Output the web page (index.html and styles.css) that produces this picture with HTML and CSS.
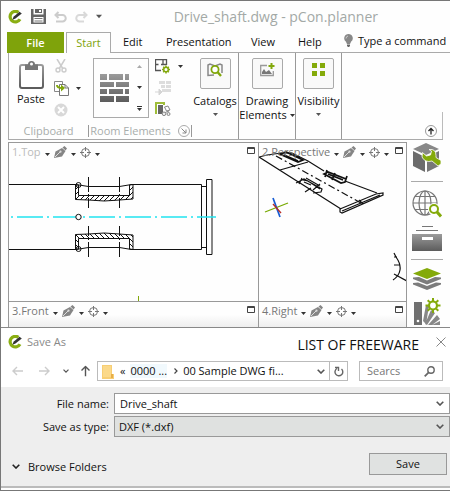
FILE: index.html
```html
<!DOCTYPE html>
<html lang="en">
<head>
<meta charset="utf-8">
<title>Drive_shaft.dwg - pCon.planner</title>
<link rel="stylesheet" href="styles.css">
</head>
<body>
<svg class="defs" aria-hidden="true">
  <defs>
    <linearGradient id="steel" x1="0" y1="0" x2="0" y2="1"><stop offset="0" stop-color="#9b9b9b"/><stop offset="1" stop-color="#5c5c5c"/></linearGradient>
    <pattern id="hatch" width="5" height="5" patternUnits="userSpaceOnUse"><path d="M-1 6L6-1M-1 1L1-1M4 6L6 4" stroke="#111" stroke-width="1"/></pattern>
    <symbol id="logo" viewBox="0 0 14 14"><path d="M10.500 2.300A5.300 5.300 0 1 0 12 9.300" fill="none" stroke="#8aae12" stroke-width="3.200"/><path d="M4.500 9.800l1-3L11.500 1.800 13.800 3.500 7.500 8.500z" fill="#333"/></symbol>
    <symbol id="caret" viewBox="0 0 5 3"><path d="M0 0h5L2.500 3z" fill="currentColor"/></symbol>
    <symbol id="chevron" viewBox="0 0 8 5"><path d="M.7.7L4 4 7.300.7" fill="none" stroke="currentColor" stroke-width="1.600"/></symbol>
    <symbol id="pen" viewBox="0 0 13 12"><path d="M0 12L1.500 5.500 8 2l3.500 3-3.500 5.500z" fill="#858585"/><path d="M8.500 1.500L10.500 0 13 2.500 11.500 4.500z" fill="#858585"/><path d="M1 11l5-5" stroke="#ddd"/><circle cx="6.500" cy="5.700" r="1.100" fill="#ddd"/></symbol>
    <symbol id="target" viewBox="0 0 11 11"><circle cx="5.500" cy="5.500" r="4" fill="none" stroke="#777"/><path d="M5.500 0v4M5.500 7v4M0 5.500h4M7 5.500h4" stroke="#777"/></symbol>
    <symbol id="maximize" viewBox="0 0 8 7"><path d="M.5.5h7v6h-7zM0 1.500h8" fill="none" stroke="#444"/></symbol>
    <symbol id="arrow" viewBox="0 0 11 10"><path d="M11 5H1M5 1L1 5l4 4" fill="none" stroke="currentColor" stroke-width="1.400"/></symbol>
  </defs>
</svg>

<main class="app">
  <header class="titlebar">
    <svg class="logo"><use href="#logo"/></svg>
    <div class="quick">
      <button aria-label="Save file"><svg width="15" height="15" viewBox="0 0 15 15"><path d="M0 0h2.500v5.500h10V0H15v15H0z" fill="#666"/><path d="M4 0h7v4H4z" fill="#666"/><path d="M8 1h2v2H8z" fill="#fff"/><path d="M2.500 8h10v5.500h-10z" fill="#fff"/><path d="M3.500 9.500h8M3.500 12h8" stroke="#777"/></svg></button>
      <button aria-label="Undo"><svg width="13" height="12" viewBox="0 0 13 12"><path d="M4.500 1L1.500 4l3 3M2 4h6.500a3 3 0 0 1 0 6.500H2" fill="none" stroke="#ccc" stroke-width="2"/></svg></button>
      <button aria-label="Redo"><svg width="13" height="12" viewBox="0 0 13 12"><path d="M8.500 1l3 3-3 3M11 4H4.500a3 3 0 0 0 0 6.500H9" fill="none" stroke="#d9d9d9" stroke-width="2"/></svg></button>
      <button aria-label="Customize toolbar"><svg class="caret big"><use href="#caret"/></svg></button>
    </div>
    <h1>Drive_shaft.dwg - pCon.planner</h1>
  </header>

  <nav class="tabs">
    <button class="file">File</button>
    <button class="active">Start</button>
    <button class="edit">Edit</button>
    <button class="presentation">Presentation</button>
    <button class="view">View</button>
    <button class="help">Help</button>
    <button class="command"><svg width="9" height="13" viewBox="0 0 9 13"><path d="M4.500 0a4.300 4.300 0 0 0-2.700 7.600L3 10h3l1.200-2.400A4.300 4.300 0 0 0 4.500 0z" fill="#888"/><path d="M3 10.500h3v1.500l-1 1H4l-1-1z" fill="#666"/><path d="M2 4.500q0-2 2-2.500" stroke="#ccc" fill="none"/></svg>Type a command</button>
  </nav>

  <section class="ribbon">
    <div class="group clipboard">
      <div class="tools">
        <button class="paste"><svg width="25" height="29" viewBox="0 0 25 29"><rect x="1" y="5" width="23" height="23" rx="2" fill="#fff" stroke="url(#steel)" stroke-width="2"/><path d="M6 10V4.500h3a3.500 3.500 0 0 1 7 0h3V10z" fill="#777"/><circle cx="12.500" cy="4" r="1.500" fill="#fff"/></svg>Paste</button>
        <div class="stack">
          <button aria-label="Cut"><svg width="14" height="14" viewBox="0 0 14 14"><path d="M3 0l6 10M11 0L5 10" stroke="#ccc" stroke-width="1.500"/><g fill="none" stroke="#ccc" stroke-width="1.400"><circle cx="4" cy="11" r="2"/><circle cx="10" cy="11" r="2"/></g></svg></button>
          <button aria-label="Copy"><svg width="15" height="15" viewBox="0 0 15 15"><path d="M.5.500h8v10h-8z" fill="#fff" stroke="#888"/><path d="M5.500 3.500H11l3.500 3.500v7.500h-9z" fill="#fff" stroke="#777"/><path d="M11 3.500V7h3.500" fill="none" stroke="#777"/><path d="M3 4q0 3 5 3" fill="none" stroke="#82a80c" stroke-width="2"/><path d="M7 3.500l4 3.500-4 3.500z" fill="#82a80c"/></svg><svg class="caret"><use href="#caret"/></svg></button>
          <button aria-label="Delete"><svg width="14" height="14" viewBox="0 0 14 14"><circle cx="7" cy="7" r="6.500" fill="#d8d8d8"/><path d="M4 4l6 6M10 4l-6 6" stroke="#fff" stroke-width="2"/></svg></button>
        </div>
      </div>
      <footer>Clipboard</footer>
    </div>
    <div class="group room">
      <div class="tools">
        <div class="gallery">
          <svg width="29" height="28" viewBox="0 0 29 28" fill="url(#steel)"><path d="M0 0h7v6H0zM9 0h14v6H9zM25 0h4v6h-4zM0 8h14v5H0zM16 8h13v5H16zM0 15h7v5H0zM9 15h14v5H9zM25 15h4v5h-4zM0 22h14v6H0zM16 22h13v6H16z"/></svg>
          <div class="steps">
            <button aria-label="Previous"><svg class="caret up"><use href="#caret"/></svg></button>
            <button aria-label="Next"><svg class="caret"><use href="#caret"/></svg></button>
            <button aria-label="More"><svg width="5" height="5" viewBox="0 0 5 5"><path d="M0 .5h5" stroke="#333"/><path d="M0 2h5L2.500 5z" fill="#333"/></svg></button>
          </div>
        </div>
        <div class="stack">
          <button aria-label="Room"><svg width="16" height="15" viewBox="0 0 16 15"><path d="M6 11.500H.5V.500h11V6M.5 5.500h3M6 5.500h2V.500M11 5.500H8" fill="none" stroke="#555" stroke-width="1.300"/><g stroke="#82a80c" stroke-width="1.500" fill="none"><circle cx="11" cy="10.500" r="2.300"/><path d="M11 6.500v2M11 12.500v2M7 10.500h2M13 10.500h2M8.200 7.700l1.300 1.300M12.500 12l1.300 1.300M13.800 7.700L12.500 9M9.500 12l-1.300 1.300"/></g></svg><svg class="caret"><use href="#caret"/></svg></button>
          <button aria-label="Insert wall"><svg width="16" height="15" viewBox="0 0 16 15"><path d="M4 0h6v3H4zM11 0h5v3h-5zM6 4h4v3H6zM11 4h5v3h-5zM7 8h9v3H7z" fill="#ddd"/><path d="M0 11h6M4 8v6l3-3z" stroke="#d5d5d5" fill="#d5d5d5"/></svg></button>
          <button aria-label="Room objects"><svg width="16" height="15" viewBox="0 0 16 15"><path d="M1 12V1h8v2" fill="none" stroke="#9fbd39" stroke-width="2"/><path d="M3 3h5v9H3z" fill="#666"/><path d="M9.500 5l3.500-1 2 4-3.500 1zM9 11l5-2" fill="#fff" stroke="#888"/><circle cx="9" cy="11.800" r="1.800" fill="#eee" stroke="#888"/><circle cx="13.500" cy="12" r="1.500" fill="#eee" stroke="#888"/></svg></button>
        </div>
      </div>
      <footer>Room Elements <svg width="12" height="12" viewBox="0 0 12 12"><circle cx="6" cy="6" r="5.500" fill="none" stroke="#aaa"/><path d="M3.500 3.500L8 8M8 4.500V8H4.500" fill="none" stroke="#888"/></svg></footer>
    </div>
    <div class="group full">
      <button class="large"><span class="tile"><svg width="16" height="14" viewBox="0 0 16 14"><path d="M7 12L1 12.500V2l2-1 5 2 5-2 2 1v8" fill="none" stroke="#888" stroke-width="1.500"/><circle cx="8" cy="6.500" r="3.600" fill="#fff" stroke="#82a80c" stroke-width="1.800"/><path d="M10.500 9l3.500 4" stroke="#82a80c" stroke-width="2.400"/></svg></span><span>Catalogs</span><svg class="caret"><use href="#caret"/></svg></button>
    </div>
    <div class="group full">
      <button class="large"><span class="tile"><svg width="15" height="14" viewBox="0 0 15 14"><path d="M7 2.500H.700V12.500H13.300V8" fill="none" stroke="#999" stroke-width="1.300"/><path d="M2 11V9l2-3 2 3 3-2 3 4z" fill="#777"/><path d="M11.500 0v6M8.500 3h6" stroke="#82a80c" stroke-width="2"/></svg></span><span>Drawing</span><span class="second">Elements <svg class="caret"><use href="#caret"/></svg></span></button>
    </div>
    <div class="group full">
      <button class="large"><span class="tile"><svg width="13" height="13" viewBox="0 0 13 13"><path d="M0 0h5v5H0zM8 0h5v5H8zM0 8h5v5H0zM8 8h5v5H8z" fill="#84aa0a"/></svg></span><span>Visibility</span><svg class="caret"><use href="#caret"/></svg></button>
    </div>
    <div class="collapse"><button aria-label="Collapse ribbon"><svg width="12" height="12" viewBox="0 0 12 12"><circle cx="6" cy="6" r="5.500" fill="#fff" stroke="#999"/><path d="M6 9.500V3.500M3.500 6L6 3.500 8.500 6" fill="none" stroke="#222" stroke-width="1.300"/></svg></button></div>
  </section>

  <section class="workspace">
    <div class="viewports">
      <article class="viewport">
        <svg class="drawing" width="248" height="158" viewBox="9 143 248 158">
          <g fill="none" stroke="#111">
            <path d="M9 184.500H76M131 184.500H201.500V249.500H131M76 249.500H9M201 186.500h6M201 247.500h6"/>
            <path d="M206.500 179.500h5.500v75h-5.500z"/>
            <path d="M11 217h205" stroke="#22e4f0" stroke-width="1.600" stroke-dasharray="2 4 26 4"/>
            <g id="pocket">
              <path d="M75.500 185v14.500l13 .5q16 2 31 0l13.500-1V184.500l-3.500.5v10.500h-51V185z" fill="url(#hatch)"/>
              <path d="M76 184.500l12.500 2h31l12-2"/>
              <circle cx="78.500" cy="185" r="2.500"/>
              <path d="M88.500 177v15M88.500 194v1M88.500 198v10M119.500 177v15M119.500 194v1M119.500 198v10"/>
            </g>
            <use href="#pocket" transform="matrix(1 0 0 -1 0 434)"/>
            <circle cx="78.500" cy="217" r="2.700" fill="#fff"/>
            <path d="M138.500 296v5" stroke="#82a80c"/>
          </g>
        </svg>
        <header class="faint"><span>1.Top</span><svg class="caret"><use href="#caret"/></svg><svg class="pen"><use href="#pen"/></svg><svg class="caret"><use href="#caret"/></svg><svg class="target"><use href="#target"/></svg><svg class="caret"><use href="#caret"/></svg><svg class="max"><use href="#maximize"/></svg></header>
      </article>
      <article class="viewport">
        <svg class="drawing" width="148" height="158" viewBox="259 143 148 158">
          <g fill="none" stroke="#111" stroke-width="1.200">
            <path d="M259 157l82 52M259 157l8-2 7-1 8-1 10 0 16 8 16 10M345 181l32 12M280 170l28-8"/>
            <path d="M276 156l85 47" stroke-dasharray="7 3 2 3"/>
            <path d="M340 209l36-15 7-1v2l-41 18-2-1zM342 211l38-16M359 200l4 4"/>
            <path d="M280 154l6-2 17 8-5 2zM284 155l14 6M290 153l10 5" stroke-width="1.800"/>
            <path d="M324 174l4-2 18 7-1 3-4 1zM328 174l15 6M327 170l-2 7M335 173l-3 7M347 176l-2 6" stroke-width="1.700"/>
            <path d="M296 183l8-4 18 10-1 3-8 1M303 180l5 1 12 8M306 178l14 8M302 178l-3 6M311 188l-6 4M320 184l-7 6M304 182l7 3"/>
            <path d="M394 253l2 4q5 7 4 13-1 6-7 10M394 257h3M394 265h6M394 274l13 7"/>
          </g>
          <g fill="none" stroke-width="1.300"><path d="M265 212l23-9" stroke="#77a900"/><path d="M273 198l7 19" stroke="#175dd4" stroke-width="1.700"/><path d="M273 204l8 9" stroke="#b82b25"/></g>
        </svg>
        <header><span>2.Perspective</span><svg class="caret"><use href="#caret"/></svg><svg class="pen"><use href="#pen"/></svg><svg class="caret"><use href="#caret"/></svg><svg class="target"><use href="#target"/></svg><svg class="caret"><use href="#caret"/></svg><svg class="max"><use href="#maximize"/></svg></header>
      </article>
      <article class="viewport low">
        <header><span>3.Front</span><svg class="caret"><use href="#caret"/></svg><svg class="pen"><use href="#pen"/></svg><svg class="caret"><use href="#caret"/></svg><svg class="target"><use href="#target"/></svg><svg class="caret"><use href="#caret"/></svg><svg class="max"><use href="#maximize"/></svg></header>
      </article>
      <article class="viewport low">
        <header><span>4.Right</span><svg class="caret"><use href="#caret"/></svg><svg class="pen"><use href="#pen"/></svg><svg class="caret"><use href="#caret"/></svg><svg class="target"><use href="#target"/></svg><svg class="caret"><use href="#caret"/></svg><svg class="max"><use href="#maximize"/></svg></header>
      </article>
    </div>
    <aside class="sidebar">
      <button aria-label="Modeling"><svg width="30" height="30" viewBox="0 0 30 30"><path d="M14 0l13 6-13 6L1 6z" fill="#888"/><path d="M1 8l12 6v15L1 23z" fill="#6c6c6c"/><path d="M27 8l-12 6v15l12-6z" fill="#777"/><path d="M10.500 9.500l4 3.500 4-1 1-4-2.500-1.500q7-1 7 6v2l5 3v3.500l-3 2-6-5q-7 2-10-4z" fill="#84aa0a" stroke="#fff" stroke-width=".8"/></svg></button>
      <hr>
      <button aria-label="Online catalogs"><svg width="30" height="28" viewBox="0 0 30 28"><g fill="none" stroke="#777" stroke-width="1.200"><circle cx="13" cy="13" r="12"/><ellipse cx="13" cy="13" rx="6" ry="12"/><path d="M13 1v24M1 13h24M3 6.500h20M3 19.500h20"/></g><circle cx="22" cy="19" r="6" fill="#fff"/><circle cx="22" cy="19" r="4" fill="#fff" stroke="#84aa0a" stroke-width="2"/><path d="M25 22l4 4.500" stroke="#84aa0a" stroke-width="3"/></svg></button>
      <button aria-label="Drawer"><svg width="30" height="25" viewBox="0 0 30 25"><path d="M10 .5h11M4 4.500h22" stroke="#777"/><path d="M0 8h30v17H0z" fill="url(#steel)"/><path d="M10 11h11v3H10z" fill="#fff"/></svg></button>
      <hr>
      <button aria-label="Layers"><svg width="30" height="22" viewBox="0 0 30 22"><path d="M15 0l14 5.500L15 11 1 5.500z" fill="#84aa0a"/><path d="M1 9.500L7 9l8 3.500L23 9l6 .5v1.500L15 16.500 1 11zM1 15l5-.5 9 3.500 9-3.500 5 .5v1.500L15 22 1 16.500z" fill="#7c7c7c"/></svg></button>
      <button aria-label="Materials"><svg width="30" height="28" viewBox="0 0 30 28"><path d="M2 4h8v23H2z" fill="#707070"/><path d="M11 23l3-16 3 1-3 18zM13 26l6-14 4 3-8 12zM16 27l9-10 3 4-8 6zM20 27l8-4v4z" fill="#888"/><circle cx="6" cy="23" r="1.300" fill="#fff"/><circle cx="21" cy="7.500" r="4" fill="#fff" stroke="#84aa0a" stroke-width="2.200"/><path d="M21 0v3M21 12v3M13.500 7.500h3M25.500 7.500h3M15.700 2.200l2.200 2.200M24.100 10.600l2.200 2.200M26.300 2.200l-2.200 2.200M17.900 10.600l-2.200 2.200" stroke="#84aa0a" stroke-width="2"/></svg></button>
    </aside>
  </section>

  <section class="dialog">
    <header class="dialog-title">
      <svg class="logo"><use href="#logo"/></svg><h2>Save As</h2>
      <strong>LIST OF FREEWARE</strong>
      <button aria-label="Close"><svg width="10" height="10" viewBox="0 0 10 10"><path d="M.5.500l9 9M9.500.500l-9 9" stroke="#888"/></svg></button>
    </header>
    <div class="path-row">
      <button class="dim" aria-label="Back"><svg class="arrow"><use href="#arrow"/></svg></button>
      <button class="dim" aria-label="Forward"><svg class="arrow flip"><use href="#arrow"/></svg></button>
      <button class="dim recent" aria-label="Recent locations"><svg class="chev small"><use href="#chevron"/></svg></button>
      <button class="parent" aria-label="Up"><svg class="arrow turn"><use href="#arrow"/></svg></button>
      <div class="address">
        <svg width="12" height="15" viewBox="0 0 12 15"><path d="M0 1h10v9h2v5H0z" fill="#f7ce74"/><path d="M1 2h8v11H1z" fill="#fbd98a"/><path d="M9 10h2v4H9z" fill="#e7ae49"/></svg>
        <a href="#">«</a><a href="#" class="crumb">0000 ...</a><svg width="4" height="6" viewBox="0 0 4 6"><path d="M.5.500L3 3 .5 5.500" fill="none" stroke="#444" stroke-width="1.200"/></svg><a href="#" class="crumb last">00 Sample DWG fi...</a>
        <button class="history" aria-label="Previous locations"><svg class="chev"><use href="#chevron"/></svg></button>
        <button class="refresh" aria-label="Refresh"><svg width="10" height="11" viewBox="0 0 10 11"><path d="M7.500 3A3.900 3.900 0 1 1 3 2.500M1 1.500h3.500V5" fill="none" stroke="#666" stroke-width="1.400"/></svg></button>
      </div>
      <label class="search"><input type="text" aria-label="Search" placeholder="Searcs"><svg width="11" height="11" viewBox="0 0 11 11"><circle cx="7" cy="4" r="3.200" fill="none" stroke="#666" stroke-width="1.400"/><path d="M4.700 6.300L.7 10.300" stroke="#666" stroke-width="1.800"/></svg></label>
    </div>
    <form class="fields">
      <label for="name">File name:</label>
      <div class="field"><input id="name" type="text" value="Drive_shaft"><svg class="chev"><use href="#chevron"/></svg></div>
      <label for="type">Save as type:</label>
      <div class="field type"><select id="type"><option>DXF (*.dxf)</option></select><svg class="chev"><use href="#chevron"/></svg></div>
      <div class="actions">
        <button type="button" class="browse"><svg class="chev"><use href="#chevron"/></svg>Browse Folders</button>
        <button type="button" class="save">Save</button>
      </div>
    </form>
  </section>
</main>
</body>
</html>
```
FILE: styles.css
```css
* { box-sizing: border-box; }
body { margin: 0; background: #fefefe; color: #111; font: 11px/14px "Open Sans", "Noto Sans", sans-serif; }
button { display: flex; align-items: center; justify-content: center; margin: 0; padding: 0; border: 0; background: none; color: inherit; font: inherit; white-space: nowrap; }
input, select { font: inherit; color: inherit; border: 0; background: none; padding: 0; margin: 0; }
svg { display: block; flex: none; }
h1, h2 { margin: 0; font-weight: 400; }
a { color: inherit; text-decoration: none; }
.defs { position: absolute; width: 0; height: 0; }
.caret { width: 5px; height: 3px; color: #333; }
.caret.big { width: 6px; height: 5px; color: #555; }
.caret.up { transform: rotate(180deg); color: #aaa; }
.chev { width: 8px; height: 5px; color: #555; }
.chev.small { width: 6px; height: 4px; }
.logo { width: 14px; height: 14px; }

.app { border-top: 1px solid #777; border-left: 1px solid #777; border-bottom: 1px solid #777; }
.titlebar { display: flex; align-items: center; height: 31px; padding-left: 7px; }
.quick { display: flex; align-items: center; gap: 8px; margin-left: 9px; }
.titlebar h1 { flex: 1; padding: 0 72px 0 0; text-align: right; font-size: 14px; line-height: 18px; color: #a3a9a6; white-space: nowrap; }

.tabs { display: flex; align-items: stretch; height: 21px; margin-left: 6px; }
.tabs button { border-bottom: 1px solid #aaa; justify-content: flex-start; }
.tabs .file { width: 57px; justify-content: center; background: #7fa30b; color: #fff; font-weight: 600; border: 0; }
.tabs .active { width: 45px; margin-left: 2px; justify-content: center; border: 1px solid #aaa; border-bottom: 0; color: #7fa30b; font-weight: 500; }
.tabs .edit { width: 55px; padding-left: 12px; }
.tabs .presentation { width: 85px; }
.tabs .view { width: 47px; }
.tabs .help { width: 46px; }
.tabs .command { flex: 1; gap: 5px; padding-bottom: 3px; }

.ribbon { display: grid; grid-template-columns: 80px 103px 47px 57px 46px 1fr; height: 87px; margin: 0 7px 0 7px; border-left: 1px solid #aaa; border-bottom: 1px solid #aaa; }
.group { display: flex; flex-direction: column; justify-content: space-between; }
.tools { display: flex; padding: 5px 0 0 8px; }
.group footer { display: flex; align-items: center; justify-content: center; gap: 7px; height: 12px; margin-bottom: 2px; border-right: 1px solid #999; color: #a8adab; white-space: nowrap; }
.paste { flex-direction: column; justify-content: flex-start; gap: 3px; width: 28px; padding-top: 2px; }
.stack { display: flex; flex-direction: column; justify-content: space-between; align-items: flex-start; height: 60px; padding: 1px 0; margin-left: 9px; }
.stack button { gap: 7px; }
.room .tools { padding-left: 4px; }
.room .stack { margin-left: 6px; }
.gallery { display: flex; align-items: center; justify-content: space-between; width: 56px; height: 60px; padding: 0 6px 0 6px; border: 1px solid #aaa; }
.steps { display: flex; flex-direction: column; justify-content: space-between; height: 46px; }
.full { border-right: 1px solid #999; }
.large { flex-direction: column; padding-top: 5px; }
.tile { display: flex; align-items: center; justify-content: center; width: 31px; height: 31px; padding-bottom: 8px; margin-bottom: 5px; border: 1px solid #aaa; border-radius: 2px; background: #f9f9f9; }
.large > .caret { margin-top: 5px; color: #555; }
.second { display: flex; align-items: center; gap: 3px; }
.collapse { display: flex; align-items: flex-end; justify-content: flex-end; margin-top: 59px; padding: 0 5px 2px 0; border-right: 1px solid #bbb; }

.workspace { display: flex; margin: 2px 7px 0 7px; }
.viewports { flex: 1; display: grid; grid-template-columns: 250px minmax(0, 1fr); grid-template-rows: 159px 26px; border-right: 1px solid #999; }
.viewport { display: grid; grid-template-columns: minmax(0, 1fr); border: 1px solid #999; border-right: 0; border-bottom: 0; overflow: hidden; }
.viewport > * { grid-area: 1 / 1; }
.viewport header { display: flex; align-items: center; align-self: start; gap: 4px; height: 18px; padding: 0 3px; color: #777; }
.viewport header.faint { color: #bbb; }
.viewport header .caret { margin-top: 5px; }
.low { background: linear-gradient(#fefefe 50%, #eee); }
.pen { width: 13px; height: 12px; }
.target { width: 11px; height: 11px; }
.max { width: 8px; height: 7px; margin-left: auto; margin-bottom: 4px; }
.sidebar { display: flex; flex-direction: column; align-items: center; gap: 8px; width: 36px; padding: 1px 0 0 4px; }
.sidebar hr { width: 100%; margin: 0; border: 0; border-top: 1px solid #aaa; }

.dialog { border-top: 1px solid #888; border-bottom: 2px solid #bbb; margin-bottom: 2px; background: #fff; }
.dialog-title { display: flex; align-items: center; height: 27px; padding: 0 4px 0 7px; }
.dialog-title h2 { margin-left: 5px; font-size: 11px; color: #888; }
.dialog-title strong { margin: 7px 17px 0 auto; font: 400 14px/18px "Open Sans", sans-serif; }
.path-row { display: flex; align-items: center; height: 32px; padding: 0 7px 0 11px; }
.arrow { width: 11px; height: 10px; }
.flip { transform: scaleX(-1); }
.turn { transform: rotate(90deg); }
.dim { color: #ccc; margin-right: 16px; }
.dim.recent { margin: 0 11px 0 -3px; }
.parent { color: #555; margin-right: 6px; }
.address { display: flex; flex: 1; align-items: center; height: 20px; padding-left: 4px; border: 1px solid #bbb; white-space: nowrap; }
.address a { margin-left: 6px; }
.address .crumb { margin: 0 7px 0 5px; background: #f1f9fd; }
.address .last { background: none; }
.history { margin-left: auto; padding-right: 4px; }
.refresh { align-self: stretch; width: 18px; border-left: 1px solid #bbb; }
.search { display: flex; align-items: center; justify-content: space-between; width: 84px; height: 20px; margin-left: 11px; padding: 0 7px; border: 1px solid #bbb; }
.search input { width: 50px; }
.search input::placeholder { color: #777; }

.fields { display: grid; grid-template-columns: 108px 1fr; column-gap: 5px; row-gap: 2px; align-items: center; padding: 6px 0 11px; background: #eee; }
.fields label { text-align: right; }
.field { display: flex; align-items: center; height: 21px; padding-right: 5px; border: 1px solid #999; background: #fff; }
.field input, .field select { flex: 1; min-width: 0; padding-left: 5px; appearance: none; }
.field.type { background: #dfe1e0; }
.field select { padding-left: 4px; }
.actions { grid-column: 1 / -1; display: flex; align-items: center; justify-content: space-between; margin-top: 14px; padding: 0 3px 0 11px; }
.browse { gap: 8px; padding-top: 5px; }
.browse .chev { color: #222; }
.save { width: 78px; height: 22px; border: 1px solid #999; background: #e0e2e1; }
```
